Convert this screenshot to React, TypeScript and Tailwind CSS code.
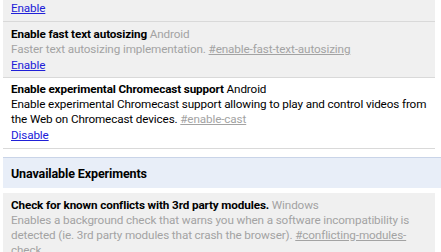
const font = { fontFamily: 'Roboto, "Noto Sans", sans-serif' };

function Link({ children }: { children: string }) {
  return <a className="text-[#2020d8] underline" href="#">{children}</a>;
}

export default function App() {
  return (
    <div className="w-[441px] h-[252px] overflow-hidden bg-white text-[11.7px] leading-[15px] tracking-[-0.12px] text-black pl-[3px]" style={font}>
      <div className="w-[432px] bg-[#f0f0f0] border-b border-[#d9d9d9] pl-2 pr-[1px] pt-[1px] pb-[5px]">
        <Link>Enable</Link>
      </div>

      <div className="w-[432px] bg-[#f0f0f0] border-b border-[#d9d9d9] pl-2 pr-[1px] pt-[5px] pb-[4px]">
        <div>
          <span className="font-bold">Enable fast text autosizing</span>{' '}
          <span className="text-[#a3a3a3]">Android</span>
        </div>
        <div className="text-[#a3a3a3]">
          Faster text autosizing implementation.{' '}
          <a className="underline" href="#">#enable-fast-text-autosizing</a>
        </div>
        <div className="mt-[1px]">
          <Link>Enable</Link>
        </div>
      </div>

      <div className="w-[432px] border-b border-[#d9d9d9] pl-2 pr-[1px] pt-[4px] pb-[5px]">
        <div>
          <span className="font-bold">Enable experimental Chromecast support</span> Android
        </div>
        <div>
          Enable experimental Chromecast support allowing to play and control videos from the Web on Chromecast devices.{' '}
          <a className="underline text-[#a3a3a3]" href="#">#enable-cast</a>
        </div>
        <div className="mt-[1px]">
          <Link>Disable</Link>
        </div>
      </div>

      <div className="mt-[8px] w-[438px] h-[31px] bg-[#e8eef8] border-t border-[#c9d4e8] flex items-center px-2 text-[12.5px] font-bold">
        Unavailable Experiments
      </div>

      <div className="mt-[5px] w-[432px] bg-[#f0f0f0] border-b border-[#d9d9d9] pl-2 pr-[1px] pt-[5px] pb-[5px]">
        <div>
          <span className="font-bold">Check for known conflicts with 3rd party modules.</span>{' '}
          <span className="text-[#a3a3a3]">Windows</span>
        </div>
        <div className="text-[#a3a3a3]">
          Enables a background check that warns you when a software incompatibility is detected (ie. 3rd party modules that crash the browser).{' '}
          <a className="underline" href="#">#conflicting-modules-check</a>
        </div>
      </div>
    </div>
  );
}
